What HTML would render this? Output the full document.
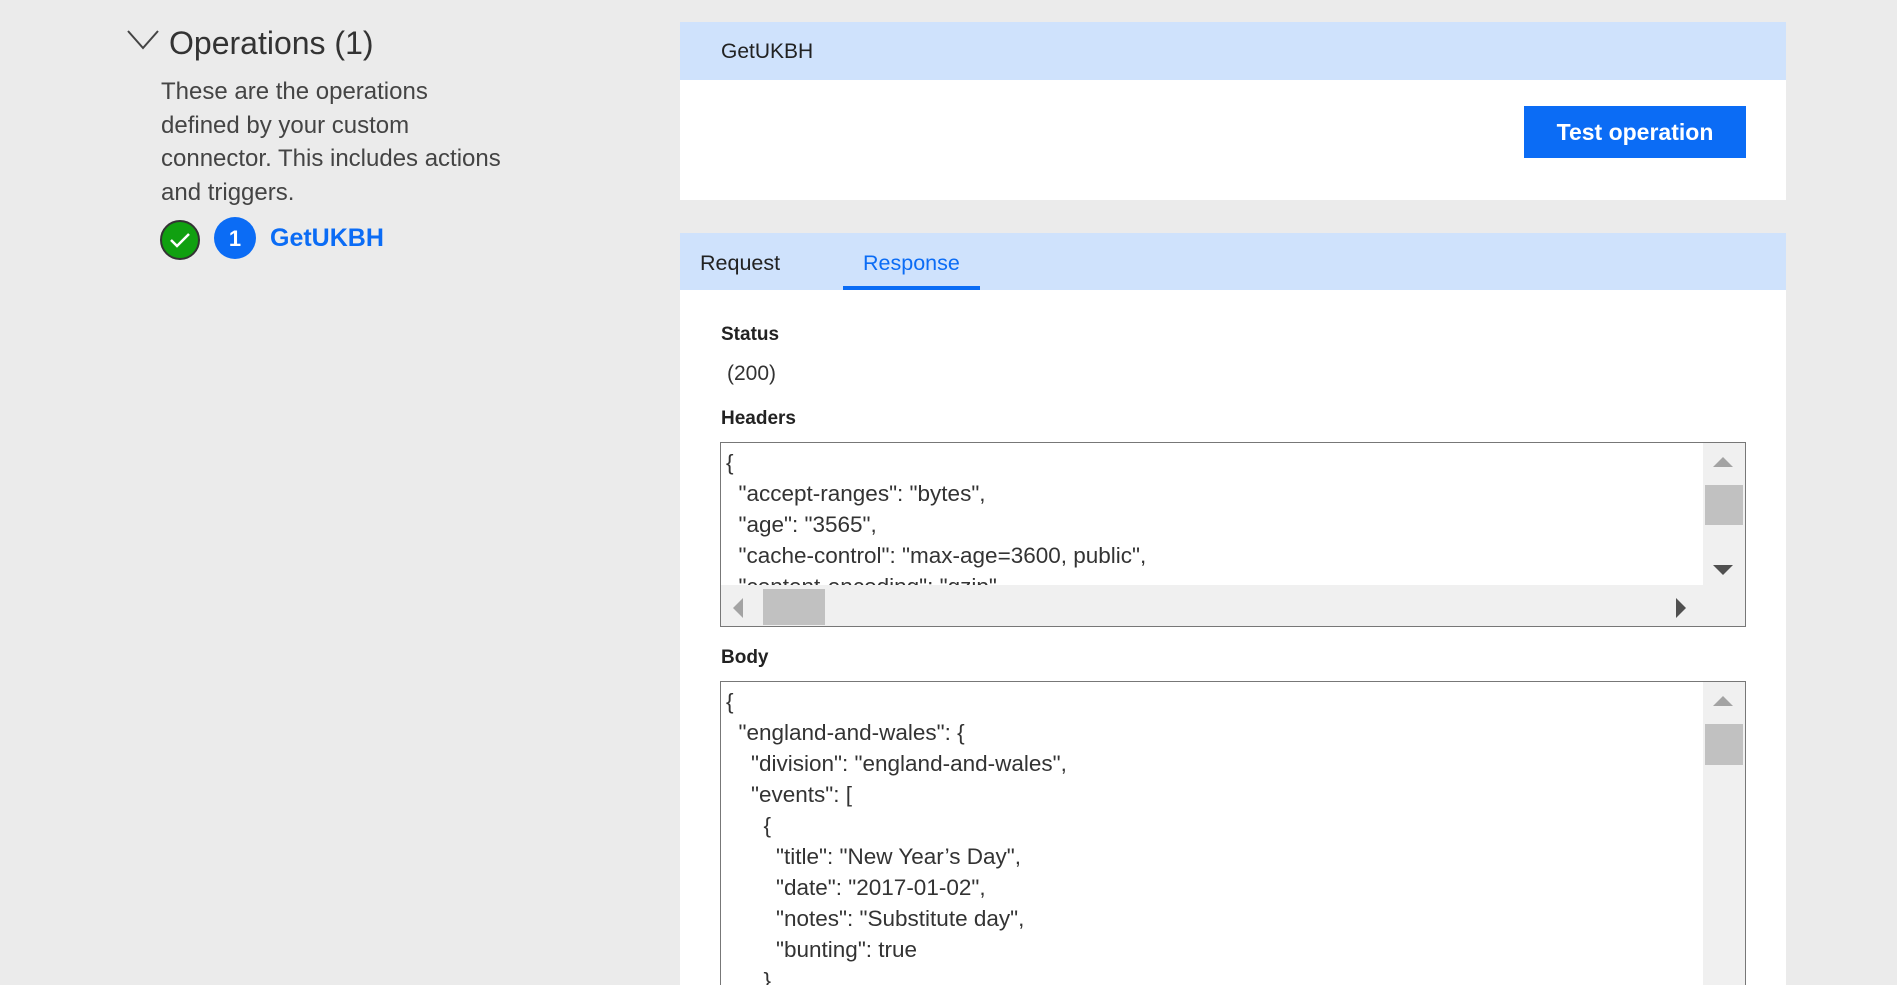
<!DOCTYPE html>
<html><head><meta charset="utf-8"><style>
*{margin:0;padding:0;box-sizing:border-box}
html{overflow:hidden;width:1897px;height:985px}
body{width:1897px;height:985px;background:#ebebeb;font-family:"Liberation Sans",sans-serif;color:#333;position:relative;overflow:hidden}
.a{position:absolute;white-space:nowrap}
.card{position:absolute;left:680px;width:1106px;background:#fff}
.band{position:absolute;left:0;right:0;background:#cfe2fc}
pre{font-family:"Liberation Sans",sans-serif;font-size:22.5px;line-height:31px;color:#333}
.box{position:absolute;left:720px;width:1026px;border:1px solid #777;background:#fff;overflow:hidden}
</style></head><body>
<svg class="a" style="left:126px;top:28px" width="36" height="24"><path d="M2 3 L17 20 L32 3" fill="none" stroke="#444" stroke-width="2"/></svg>
<div class="a" style="left:169px;top:25px;font-size:32px;color:#333">Operations (1)</div>
<div class="a" style="left:161px;top:75px;font-size:24px;line-height:33.5px;color:#444;white-space:normal;width:420px">These are the operations<br>defined by your custom<br>connector. This includes actions<br>and triggers.</div>
<svg class="a" style="left:159px;top:219px" width="42" height="42"><circle cx="21" cy="21" r="19" fill="#10a010" stroke="#333" stroke-width="2"/><path d="M12 21 L18 27 L30 15" fill="none" stroke="#fff" stroke-width="2.5"/></svg>
<svg class="a" style="left:213px;top:216px" width="44" height="44"><circle cx="22" cy="22" r="21" fill="#0b6cf5"/><text x="22" y="30" font-family="Liberation Sans" font-weight="bold" font-size="22" fill="#fff" text-anchor="middle">1</text></svg>
<div class="a" style="left:270px;top:224px;font-size:25px;font-weight:bold;color:#0b6cf5">GetUKBH</div>

<div class="card" style="top:22px;height:178px">
<div class="band" style="top:0;height:58px"></div>
<div class="a" style="left:41px;top:18px;font-size:21px;color:#222">GetUKBH</div>
<div class="a" style="left:844px;top:84px;width:222px;height:52px;background:#0b6cf5;color:#fff;font-size:23px;font-weight:bold;text-align:center;line-height:52px">Test operation</div>
</div>

<div class="card" style="top:233px;height:752px">
<div class="band" style="top:0;height:57px"></div>
<div class="a" style="left:20px;top:18px;font-size:21.5px;color:#222">Request</div>
<div class="a" style="left:183px;top:18px;font-size:21.5px;color:#0b6cf5">Response</div>
<div class="a" style="left:163px;top:53px;width:137px;height:4px;background:#0b6cf5"></div>
<div class="a" style="left:41px;top:91px;font-size:19px;font-weight:bold;color:#222">Status</div>
<div class="a" style="left:47px;top:129px;font-size:21px;color:#333">(200)</div>
<div class="a" style="left:41px;top:175px;font-size:19px;font-weight:bold;color:#222">Headers</div>
<div class="a" style="left:41px;top:414px;font-size:19px;font-weight:bold;color:#222">Body</div>
</div>

<div class="box" style="top:442px;height:185px">
<pre style="position:absolute;left:5px;top:4px">{
  "accept-ranges": "bytes",
  "age": "3565",
  "cache-control": "max-age=3600, public",
  "content-encoding": "gzip",</pre>
<div class="a" style="left:0;top:142px;width:982px;height:42px;background:#f0f0f0"></div>
<div class="a" style="left:982px;top:0;width:43px;height:184px;background:#f0f0f0"></div>
<div class="a" style="left:984px;top:42px;width:38px;height:40px;background:#c1c1c1"></div>
<div class="a" style="left:42px;top:146px;width:62px;height:36px;background:#c1c1c1"></div>
<svg class="a" style="left:987px;top:12px" width="30" height="160"><path d="M5 12 L15 2 L25 12Z" fill="#a3a3a3"/><path d="M5 110 L15 120 L25 110Z" fill="#505050"/></svg>
<svg class="a" style="left:10px;top:150px" width="970" height="30"><path d="M12 5 L2 15 L12 25Z" fill="#a3a3a3"/><path d="M945 5 L955 15 L945 25Z" fill="#505050"/></svg>
</div>

<div class="box" style="top:681px;height:320px">
<pre style="position:absolute;left:5px;top:4px">{
  "england-and-wales": {
    "division": "england-and-wales",
    "events": [
      {
        "title": "New Year’s Day",
        "date": "2017-01-02",
        "notes": "Substitute day",
        "bunting": true
      },</pre>
<div class="a" style="left:982px;top:0;width:43px;height:330px;background:#f0f0f0"></div>
<div class="a" style="left:984px;top:42px;width:38px;height:41px;background:#c1c1c1"></div>
<svg class="a" style="left:987px;top:12px" width="30" height="20"><path d="M5 12 L15 2 L25 12Z" fill="#a3a3a3"/></svg>
</div>
</body></html>
